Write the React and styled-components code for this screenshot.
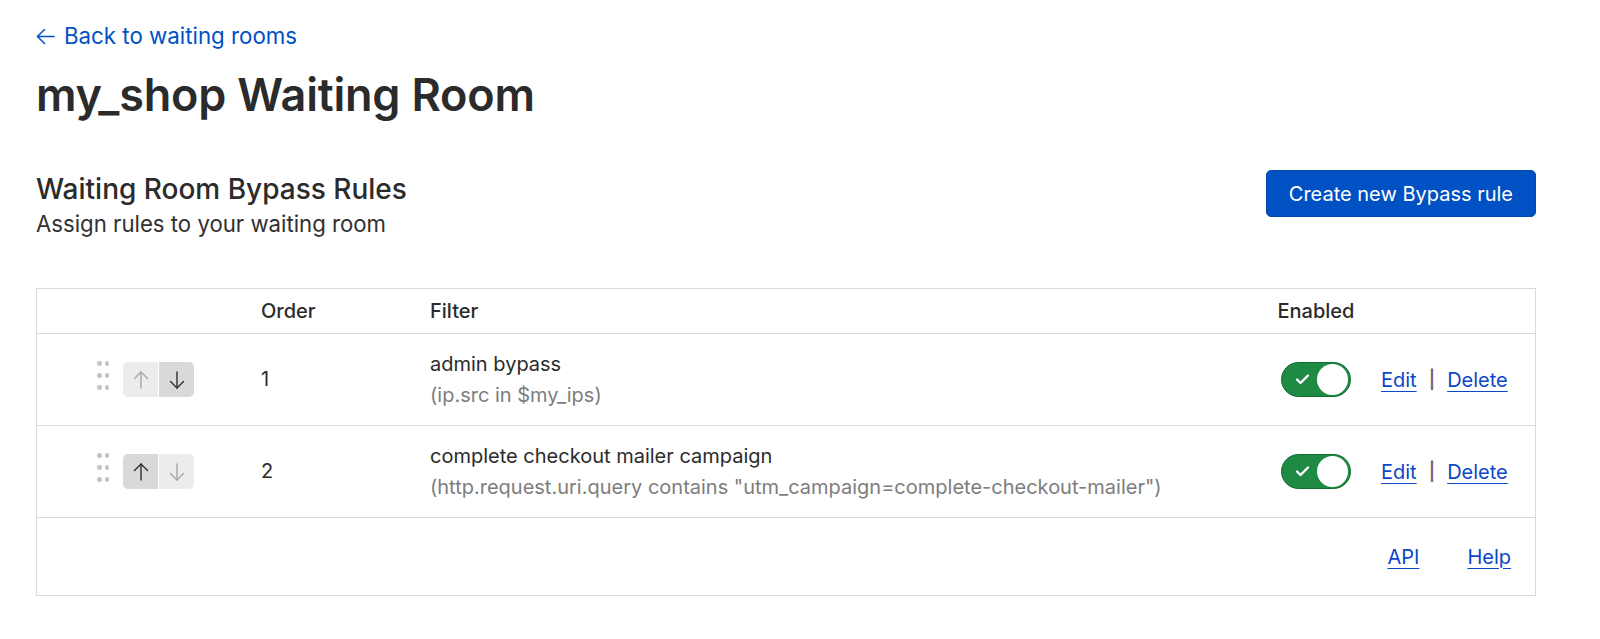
import React from "react";
import styled, { createGlobalStyle } from "styled-components";

const Global = createGlobalStyle`
  html, body { margin: 0; padding: 0; background: #fff; }
  body {
    font-family: Inter, "Noto Sans", "Liberation Sans", sans-serif;
    color: #313131;
    -webkit-font-smoothing: antialiased;
  }
  * { box-sizing: border-box; }
`;

const Page = styled.main`
  padding: 23px 64px 40px 36px;
  display: flex;
  flex-direction: column;
`;

const BackLink = styled.a`
  display: inline-flex;
  align-items: center;
  gap: 9px;
  align-self: flex-start;
  color: #0051c3;
  font-size: 22.3px;
  line-height: 26px;
  text-decoration: none;
  cursor: pointer;
`;

const Title = styled.h1`
  margin: 19px 0 0;
  font-size: 45px;
  line-height: 54px;
  font-weight: 600;
  color: #2b2b2b;
  letter-spacing: -0.2px;
`;

const SectionHeader = styled.div`
  display: flex;
  justify-content: space-between;
  align-items: flex-start;
  margin-top: 48px;
`;

const HeaderText = styled.div`
  display: flex;
  flex-direction: column;
  padding-top: 2px;
`;

const SectionTitle = styled.h2`
  margin: 0;
  font-size: 28px;
  line-height: 34px;
  font-weight: 500;
  color: #2b2b2b;
`;

const SectionSub = styled.p`
  margin: 4px 0 0;
  font-size: 22.2px;
  line-height: 28px;
  color: #313131;
`;

const PrimaryButton = styled.button`
  height: 47px;
  padding: 0 22px;
  background: #0051c3;
  color: #fff;
  border: 1px solid #0049b0;
  border-radius: 5px;
  font-family: inherit;
  font-size: 20px;
  cursor: pointer;
`;

const Table = styled.div`
  margin-top: 50px;
  border: 1px solid #d9d9d9;
  display: flex;
  flex-direction: column;
`;

const Row = styled.div`
  display: grid;
  grid-template-columns: 224px 169px 1fr 78px 180px;
  align-items: center;
  min-height: ${(p) => p.$h}px;
  border-bottom: 1px solid #d9d9d9;
`;

const HeadCell = styled.div`
  font-size: 20px;
  font-weight: 500;
  color: #2b2b2b;
  text-align: ${(p) => (p.$center ? "center" : "left")};
`;

const Controls = styled.div`
  display: flex;
  align-items: center;
  gap: 14px;
  padding-left: 60px;
`;

const Grip = styled.div`
  display: grid;
  grid-template-columns: repeat(2, 4.5px);
  grid-auto-rows: 4.5px;
  column-gap: 3px;
  row-gap: 7.5px;
  margin-top: -8px;
  span {
    width: 4.5px;
    height: 4.5px;
    border-radius: 50%;
    background: #c4c4c4;
  }
`;

const ArrowGroup = styled.div`
  display: flex;
  gap: 1px;
  border-radius: 5px;
  overflow: hidden;
`;

const ArrowBtn = styled.button`
  width: 35px;
  height: 35px;
  padding: 0;
  border: none;
  display: flex;
  align-items: center;
  justify-content: center;
  background: ${(p) => (p.$active ? "#d9d9d9" : "#ececec")};
  color: ${(p) => (p.$active ? "#2b2b2b" : "#a6a6a6")};
  cursor: ${(p) => (p.$active ? "pointer" : "default")};
`;

const Cell = styled.div`
  font-size: 20px;
  line-height: 27px;
  color: #2b2b2b;
`;

const FilterCell = styled.div`
  display: flex;
  flex-direction: column;
  gap: 4px;
  font-size: 20px;
  line-height: 27px;
`;

const FilterName = styled.span`
  color: #2b2b2b;
`;

const FilterExpr = styled.span`
  color: #7d7d7d;
`;

const ToggleCell = styled.div`
  display: flex;
  justify-content: center;
`;

const Toggle = styled.div`
  position: relative;
  width: 70px;
  height: 35px;
  border-radius: 18px;
  background: #1f8a43;
  border: 1px solid #136c30;
  svg {
    position: absolute;
    left: 13px;
    top: 10px;
  }
`;

const Knob = styled.span`
  position: absolute;
  right: 2px;
  top: 1px;
  width: 31px;
  height: 31px;
  border-radius: 50%;
  background: #fff;
`;

const Actions = styled.div`
  display: flex;
  align-items: center;
  gap: 12px;
  padding-left: 26px;
  font-size: 20px;
`;

const TextLink = styled.a`
  color: #0a47c9;
  text-decoration: underline;
  text-underline-offset: 4px;
  text-decoration-thickness: 1px;
  cursor: pointer;
`;

const Sep = styled.span`
  color: #6b6b6b;
  font-size: 18px;
  font-weight: 600;
`;

const Footer = styled.div`
  display: flex;
  justify-content: flex-end;
  align-items: center;
  gap: 48px;
  height: 77px;
  padding-right: 24px;
  font-size: 20px;
`;

const ArrowIcon = ({ dir }) => (
  <svg width="16" height="20" viewBox="0 0 16 20" fill="none" stroke="currentColor" strokeWidth="1.4" strokeLinecap="round" strokeLinejoin="round">
    {dir === "up" ? (
      <>
        <path d="M8 2v16" />
        <path d="M1.5 8.5L8 2l6.5 6.5" />
      </>
    ) : (
      <>
        <path d="M8 2v16" />
        <path d="M1.5 11.5L8 18l6.5-6.5" />
      </>
    )}
  </svg>
);

const rules = [
  { order: 1, name: "admin bypass", expr: "(ip.src in $my_ips)", up: false, down: true },
  {
    order: 2,
    name: "complete checkout mailer campaign",
    expr: '(http.request.uri.query contains "utm_campaign=complete-checkout-mailer")',
    up: true,
    down: false,
  },
];

export default function App() {
  return (
    <>
      <Global />
      <Page>
        <BackLink>
          <svg width="19" height="17" viewBox="0 0 19 17" fill="none" stroke="currentColor" strokeWidth="1.5" strokeLinecap="round" strokeLinejoin="round">
            <path d="M18 8.5H1.5" />
            <path d="M8.5 1.5L1.5 8.5l7 7" />
          </svg>
          Back to waiting rooms
        </BackLink>
        <Title>my_shop Waiting Room</Title>
        <SectionHeader>
          <HeaderText>
            <SectionTitle>Waiting Room Bypass Rules</SectionTitle>
            <SectionSub>Assign rules to your waiting room</SectionSub>
          </HeaderText>
          <PrimaryButton>Create new Bypass rule</PrimaryButton>
        </SectionHeader>
        <Table>
          <Row $h={45}>
            <div />
            <HeadCell>Order</HeadCell>
            <HeadCell>Filter</HeadCell>
            <HeadCell $center>Enabled</HeadCell>
            <div />
          </Row>
          {rules.map((r) => (
            <Row key={r.order} $h={92}>
              <Controls>
                <Grip>
                  <span /><span /><span /><span /><span /><span />
                </Grip>
                <ArrowGroup>
                  <ArrowBtn $active={r.up} aria-label="Move up">
                    <ArrowIcon dir="up" />
                  </ArrowBtn>
                  <ArrowBtn $active={r.down} aria-label="Move down">
                    <ArrowIcon dir="down" />
                  </ArrowBtn>
                </ArrowGroup>
              </Controls>
              <Cell>{r.order}</Cell>
              <FilterCell>
                <FilterName>{r.name}</FilterName>
                <FilterExpr>{r.expr}</FilterExpr>
              </FilterCell>
              <ToggleCell>
                <Toggle>
                  <svg width="15" height="12" viewBox="0 0 15 12" fill="none" stroke="#fff" strokeWidth="2.4" strokeLinecap="round" strokeLinejoin="round">
                    <path d="M2 6.5l3.5 3.5L13 2.5" />
                  </svg>
                  <Knob />
                </Toggle>
              </ToggleCell>
              <Actions>
                <TextLink>Edit</TextLink>
                <Sep>|</Sep>
                <TextLink>Delete</TextLink>
              </Actions>
            </Row>
          ))}
          <Footer>
            <TextLink>API</TextLink>
            <TextLink>Help</TextLink>
          </Footer>
        </Table>
      </Page>
    </>
  );
}
